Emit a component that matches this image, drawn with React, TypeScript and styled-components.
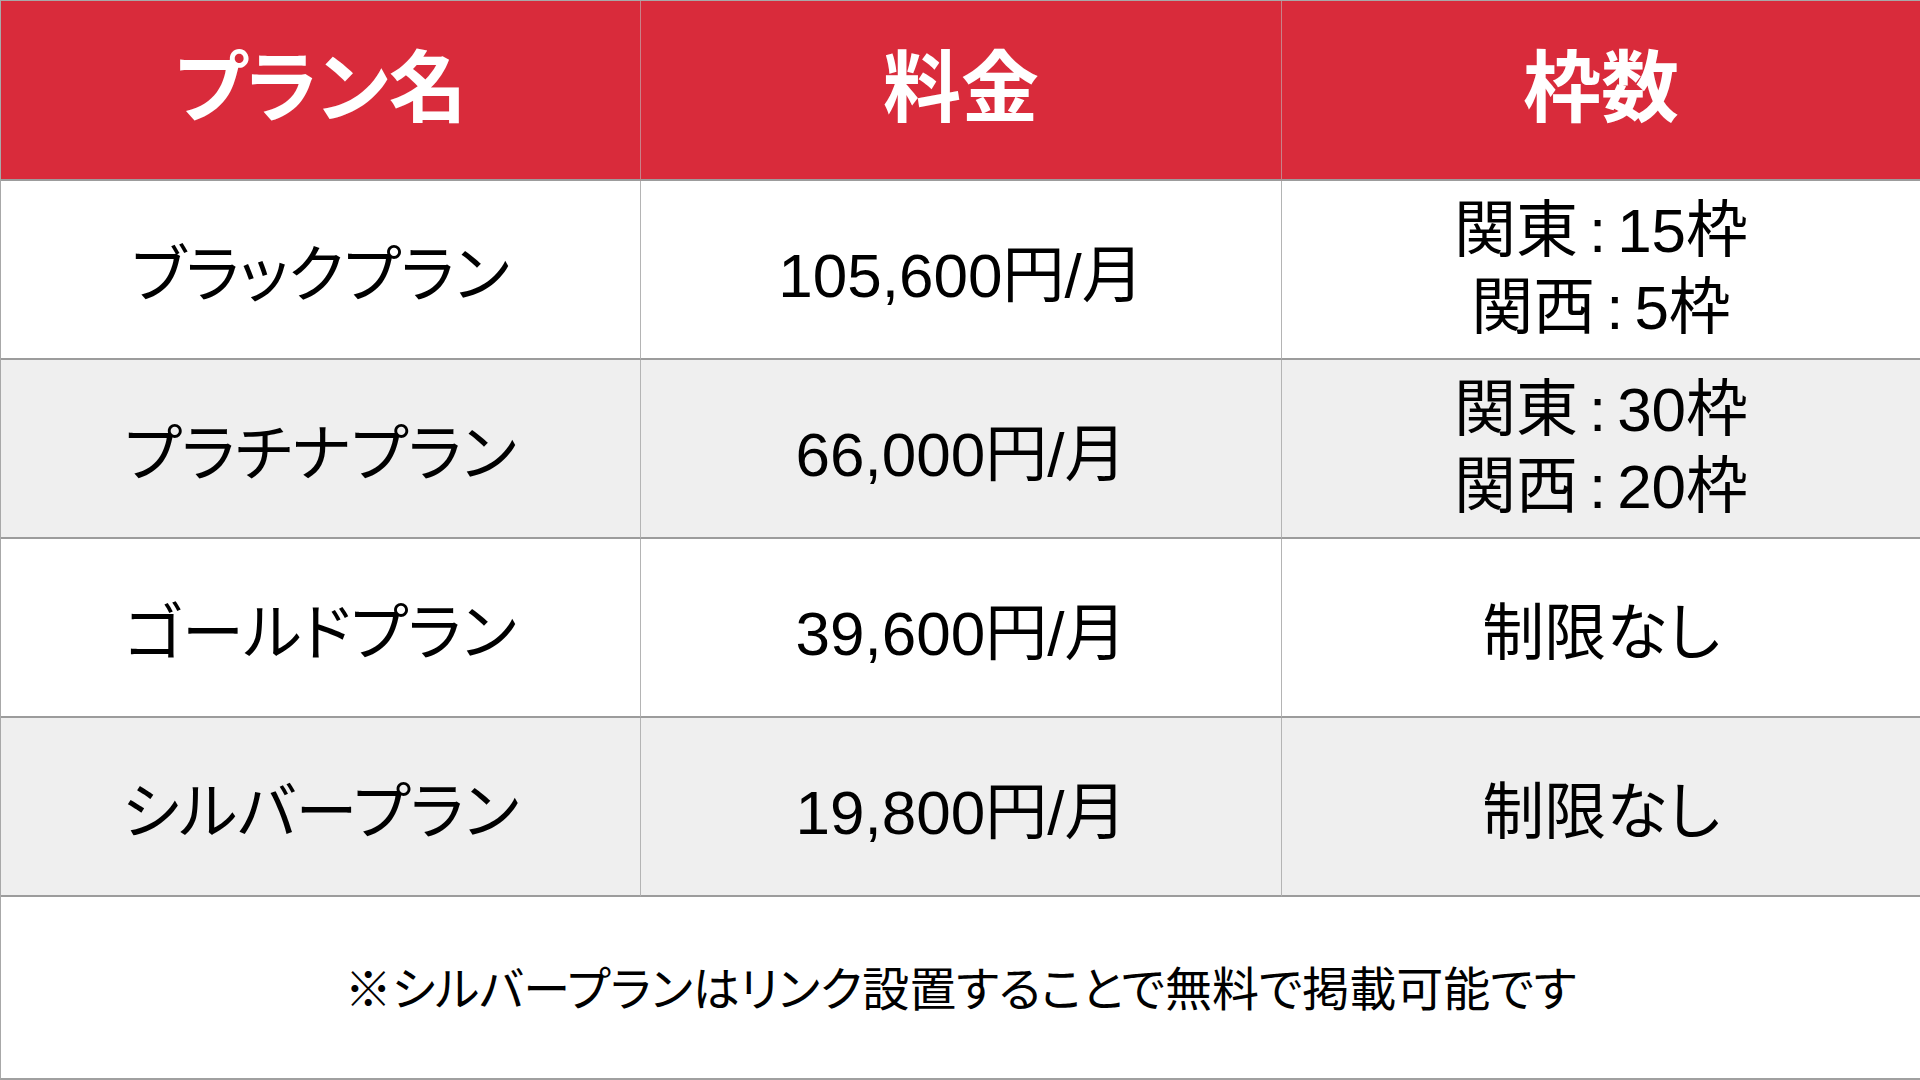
import styled, { createGlobalStyle } from 'styled-components';

const GlobalStyle = createGlobalStyle`
  html, body {
    margin: 0;
    padding: 0;
    background: #fff;
  }
  body {
    font-family: "Liberation Sans", "Noto Sans CJK JP", sans-serif;
    font-feature-settings: "palt";
    color: #000;
  }
`;

interface Plan {
  name: string;
  price: string;
  slots: { area: string; count: string }[] | string;
}

const plans: Plan[] = [
  {
    name: 'ブラックプラン',
    price: '105,600円/月',
    slots: [
      { area: '関東', count: '15枠' },
      { area: '関西', count: '5枠' },
    ],
  },
  {
    name: 'プラチナプラン',
    price: '66,000円/月',
    slots: [
      { area: '関東', count: '30枠' },
      { area: '関西', count: '20枠' },
    ],
  },
  { name: 'ゴールドプラン', price: '39,600円/月', slots: '制限なし' },
  { name: 'シルバープラン', price: '19,800円/月', slots: '制限なし' },
];

const App = () => {
  return (
    <>
      <GlobalStyle />
      <Table>
        <HeadCell>プラン名</HeadCell>
        <HeadCell>料金</HeadCell>
        <HeadCell $last>枠数</HeadCell>

        {plans.map((plan, i) => (
          <Row key={plan.name}>
            <Cell $shade={i % 2 === 1}>{plan.name}</Cell>
            <Cell $shade={i % 2 === 1}>{plan.price}</Cell>
            <Cell $shade={i % 2 === 1} $last>
              {typeof plan.slots === 'string' ? (
                plan.slots
              ) : (
                <Lines>
                  {plan.slots.map((s) => (
                    <Line key={s.area}>
                      {s.area}
                      <Sep>:</Sep>
                      {s.count}
                    </Line>
                  ))}
                </Lines>
              )}
            </Cell>
          </Row>
        ))}

        <Footer>※シルバープランはリンク設置することで無料で掲載可能です</Footer>
      </Table>
    </>
  );
};

const Table = styled.div`
  width: 1920px;
  height: 1080px;
  box-sizing: border-box;
  display: grid;
  grid-template-columns: 640px 641px 1fr;
  grid-template-rows: 180px repeat(4, 179px) 1fr;
  border-top: 1px solid #a8a8a8;
  border-left: 1px solid #a8a8a8;
  border-bottom: 2px solid #a0a0a0;
`;

const HeadCell = styled.div<{ $last?: boolean }>`
  display: flex;
  align-items: center;
  justify-content: center;
  background: #d92b3b;
  color: #fff;
  font-size: 78px;
  font-weight: 700;
  border-right: ${(p) => (p.$last ? 'none' : '1px solid #c98088')};
  border-bottom: 2px solid #9c9c9c;
  padding-bottom: 16px;
  box-sizing: border-box;
`;

const Row = styled.div`
  display: contents;
`;

const Cell = styled.div<{ $shade?: boolean; $last?: boolean }>`
  display: flex;
  align-items: center;
  justify-content: center;
  background: ${(p) => (p.$shade ? '#efefef' : '#ffffff')};
  font-size: 62px;
  border-right: ${(p) => (p.$last ? 'none' : '1px solid #b4b4b4')};
  border-bottom: 2px solid #9c9c9c;
  box-sizing: border-box;
  white-space: nowrap;
`;

const Lines = styled.div`
  display: flex;
  flex-direction: column;
  align-items: center;
  line-height: 1.24;
`;

const Line = styled.div`
  display: block;
`;

const Sep = styled.span`
  margin: 0 11px;
`;

const Footer = styled.div`
  grid-column: 1 / -1;
  display: flex;
  align-items: center;
  justify-content: center;
  font-size: 47px;
  background: #fff;
  padding-bottom: 4px;
`;

export default App;
